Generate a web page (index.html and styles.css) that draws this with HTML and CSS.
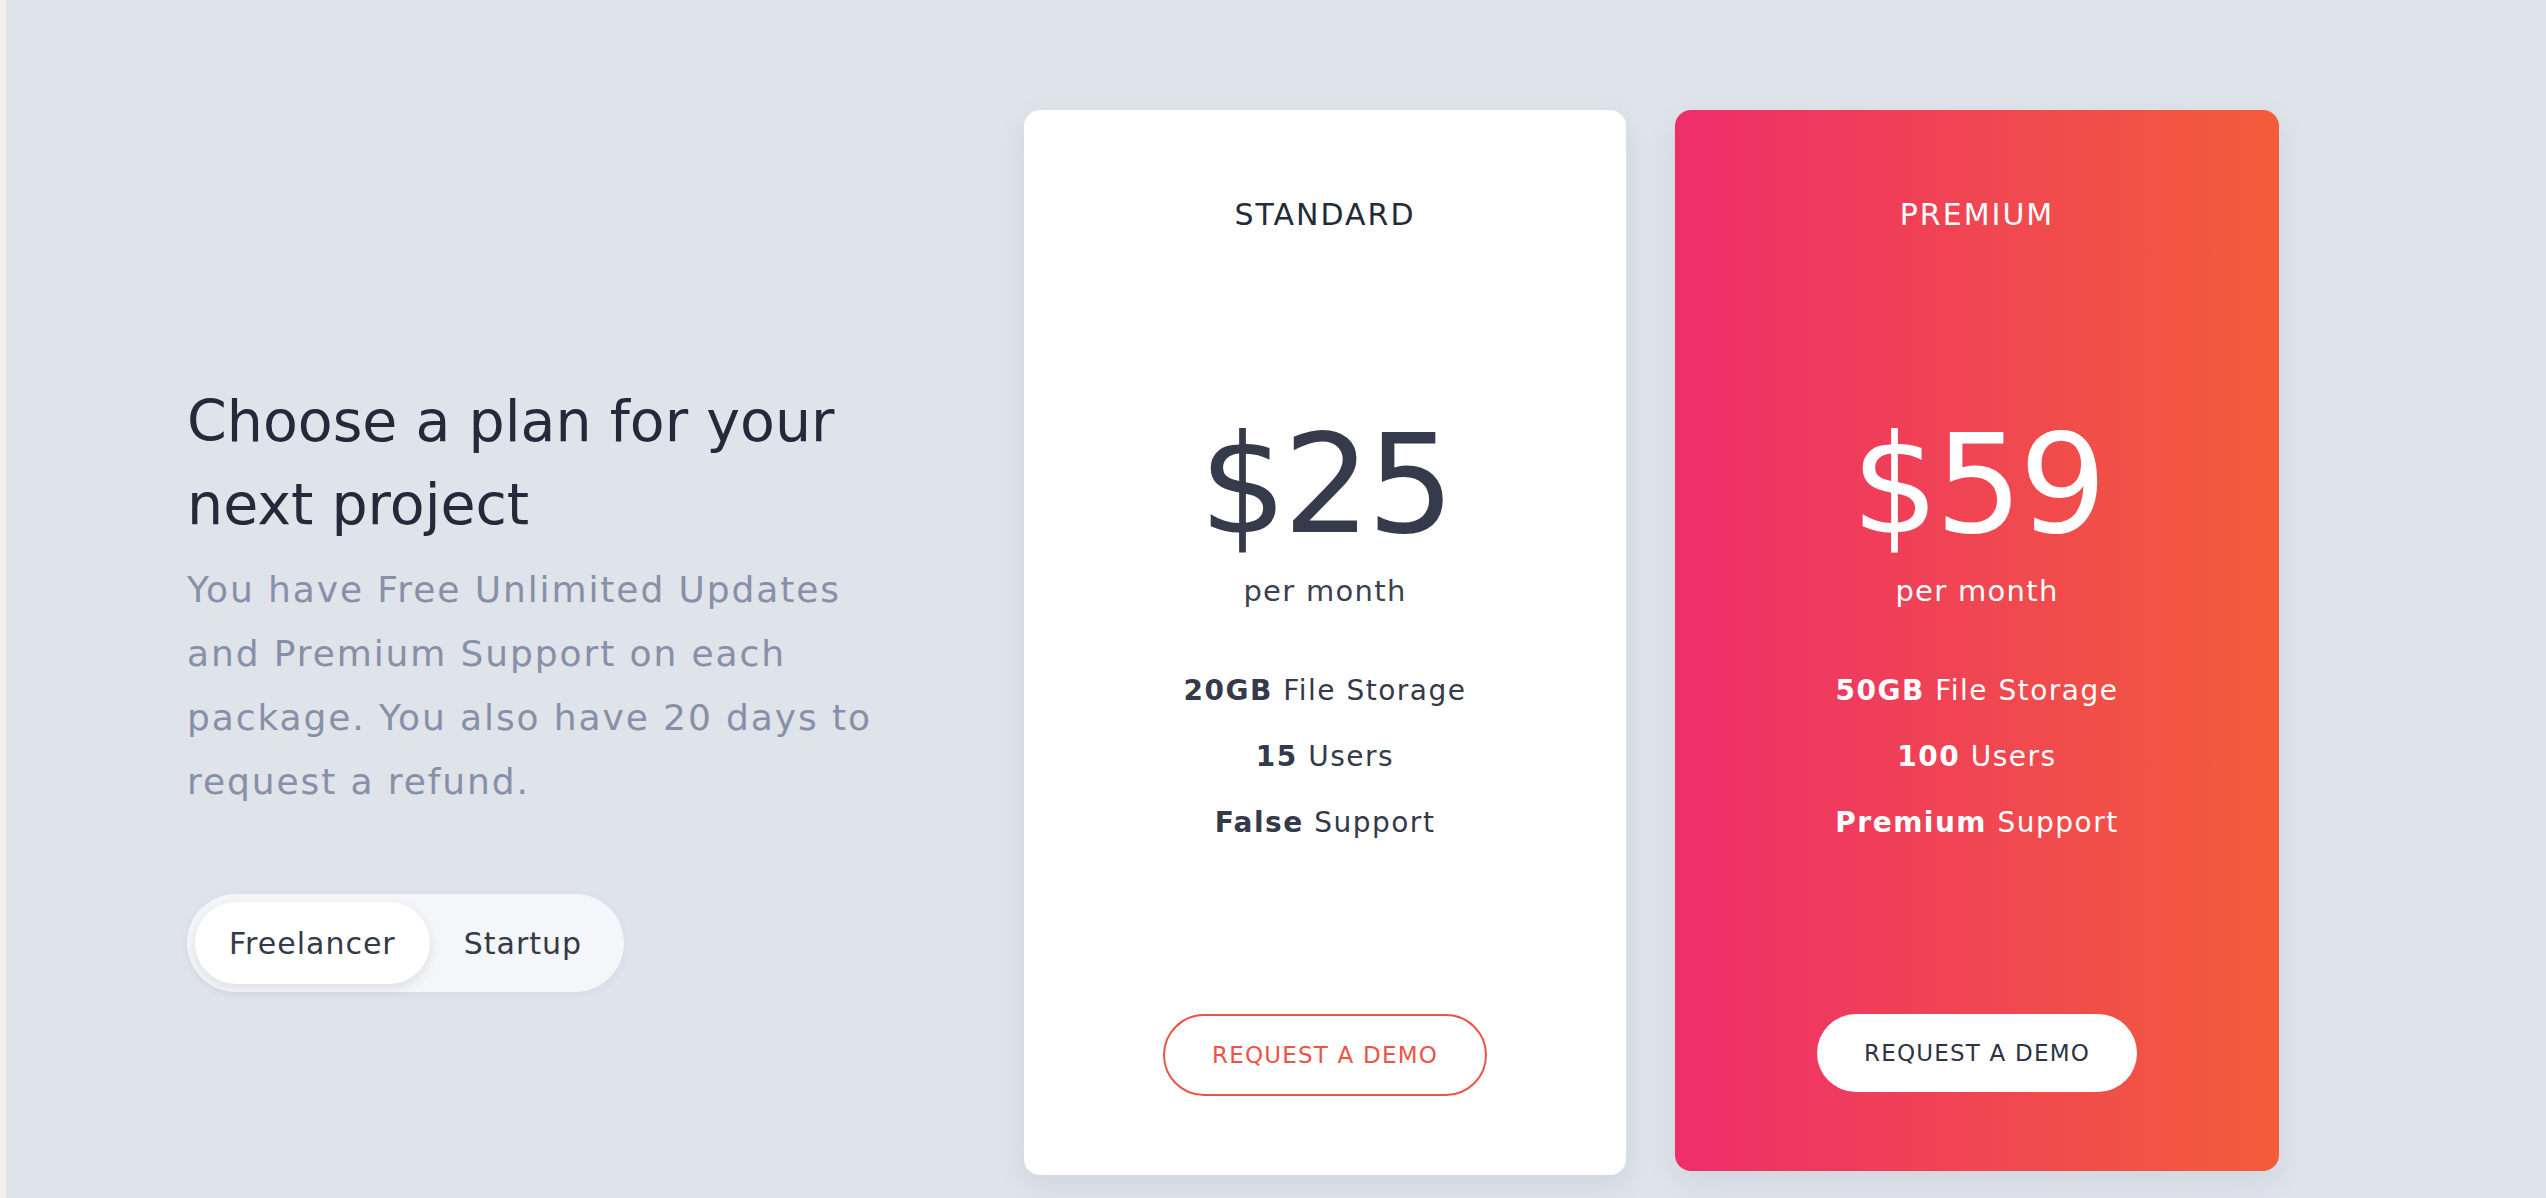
FILE: index.html
```html
<!DOCTYPE html>
<html lang="en">

<head>
    <meta charset="UTF-8">
    <meta name="viewport" content="width=device-width, initial-scale=1.0">
    <title>Pricing</title>
    <link rel="stylesheet" href="styles.css">
</head>

<body>
    <div class="container">
        <div class="intro">
            <h1>Choose a plan for your next project</h1>
            <p class="lead">You have Free Unlimited Updates and Premium Support on each package. You also have 20 days to request a refund.</p>

            <div class="switch">
                <button class="switch-btn active" onclick="pick(this)">Freelancer</button>
                <button class="switch-btn" onclick="pick(this)">Startup</button>
            </div>
        </div>

        <div class="plans">
            <div class="plan">
                <h3 class="plan-name">STANDARD</h3>
                <div class="price">$25</div>
                <div class="period">per month</div>
                <ul class="features">
                    <li><b>20GB</b> File Storage</li>
                    <li><b>15</b> Users</li>
                    <li><b>False</b> Support</li>
                </ul>
                <button class="demo-btn">REQUEST A DEMO</button>
            </div>

            <div class="plan premium">
                <h3 class="plan-name">PREMIUM</h3>
                <div class="price">$59</div>
                <div class="period">per month</div>
                <ul class="features">
                    <li><b>50GB</b> File Storage</li>
                    <li><b>100</b> Users</li>
                    <li><b>Premium</b> Support</li>
                </ul>
                <button class="demo-btn">REQUEST A DEMO</button>
            </div>
        </div>
    </div>

    <script>
        function pick(btn) {
            document.querySelectorAll(".switch-btn").forEach(b => b.classList.remove("active"));
            btn.classList.add("active");
        }
    </script>
</body>

</html>
```

FILE: styles.css
```css
* {
    margin: 0;
    padding: 0;
    box-sizing: border-box;
    font-family: 'DejaVu Sans', 'Liberation Sans', sans-serif;
}

html {
    background: #dfe3ea;
}

body {
    background: #dfe3ea;
    border-left: 6px solid #f2f1ef;
    min-height: 1198px;
    color: #343a4a;
}

.container {
    display: flex;
    align-items: flex-start;
    padding: 110px 0 0 181px;
}

.intro {
    width: 837px;
    padding-top: 270px;
}

h1 {
    font-size: 57px;
    font-weight: normal;
    line-height: 83px;
    color: #242a3a;
    width: 660px;
}

.lead {
    margin-top: 12px;
    max-width: 720px;
    font-size: 36px;
    line-height: 64px;
    letter-spacing: 1.9px;
    color: #8890a7;
}

.switch {
    display: inline-flex;
    margin-top: 80px;
    padding: 8px;
    background: #f5f6f9;
    border-radius: 50px;
    box-shadow: 0 2px 8px rgba(60, 70, 100, 0.06);
}

.switch-btn {
    height: 82px;
    padding: 0 34px;
    border: none;
    border-radius: 41px;
    background: transparent;
    font-size: 30px;
    letter-spacing: 1px;
    color: #333a48;
    cursor: pointer;
}

.switch-btn.active {
    background: #fff;
    box-shadow: 0 4px 12px rgba(40, 50, 80, 0.12);
}

.plans {
    display: flex;
    align-items: flex-start;
    gap: 49px;
}

.plan {
    width: 602px;
    padding: 85px 0 79px;
    display: flex;
    flex-direction: column;
    align-items: center;
    text-align: center;
    background: #fff;
    border-radius: 16px;
    box-shadow: 0 10px 30px rgba(40, 50, 80, 0.08);
}

.plan.premium {
    width: 604px;
    background: linear-gradient(90deg, #ee2e6a, #f25d3a);
    color: #fff;
}

.plan-name {
    font-size: 30px;
    font-weight: normal;
    line-height: 40px;
    letter-spacing: 2px;
    color: #242a38;
}

.premium .plan-name {
    color: #fff;
}

.price {
    margin-top: 182px;
    font-size: 138px;
    line-height: 136px;
    letter-spacing: -4px;
    color: #353b4b;
}

.premium .price {
    color: #fff;
}

.period {
    margin-top: 18px;
    font-size: 29px;
    line-height: 40px;
    letter-spacing: 1.3px;
    color: #3b4150;
}

.premium .period {
    color: #fff;
}

.features {
    list-style: none;
    margin-top: 47px;
}

.features li {
    font-size: 28px;
    line-height: 66px;
    letter-spacing: 1.5px;
}

.demo-btn {
    margin-top: 158px;
    padding: 27px 47px;
    border: 2px solid #eb5547;
    border-radius: 50px;
    background: #fff;
    font-size: 23px;
    line-height: 24px;
    letter-spacing: 1.2px;
    color: #eb5547;
    cursor: pointer;
}

.premium .demo-btn {
    border: none;
    color: #2e3444;
}
```
